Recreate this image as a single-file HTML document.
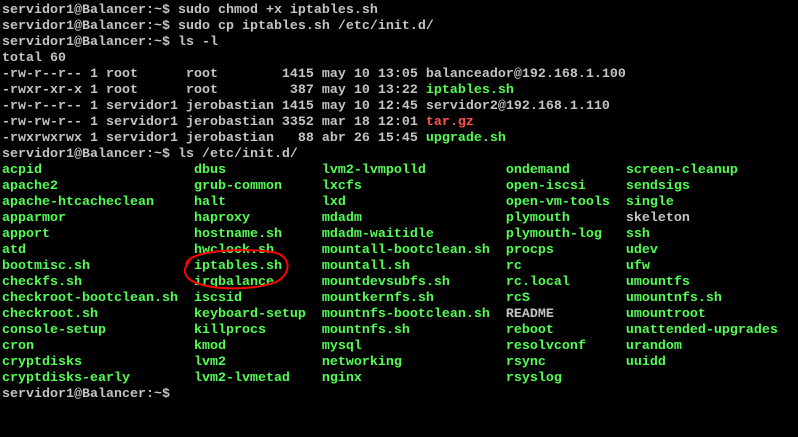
<!DOCTYPE html><html><head><style>
body{margin:0;background:#000;width:798px;height:437px;overflow:hidden;position:relative}
pre{margin:0;padding:3px 0 0 2px;font-family:"Liberation Mono",monospace;font-size:13.33px;line-height:16px;color:#c4c4c4;font-weight:bold}
.g{color:#54fc54}.r{color:#fc5454}
</style></head><body><pre>servidor1@Balancer:~$ sudo chmod +x iptables.sh
servidor1@Balancer:~$ sudo cp iptables.sh /etc/init.d/
servidor1@Balancer:~$ ls -l
total 60
-rw-r--r-- 1 root      root        1415 may 10 13:05 balanceador@192.168.1.100
-rwxr-xr-x 1 root      root         387 may 10 13:22 <span class="g">iptables.sh</span>
-rw-r--r-- 1 servidor1 jerobastian 1415 may 10 12:45 servidor2@192.168.1.110
-rw-rw-r-- 1 servidor1 jerobastian 3352 mar 18 12:01 <span class="r">tar.gz</span>
-rwxrwxrwx 1 servidor1 jerobastian   88 abr 26 15:45 <span class="g">upgrade.sh</span>
servidor1@Balancer:~$ ls /etc/init.d/
<span class="g">acpid                   dbus            lvm2-lvmpolld          ondemand       screen-cleanup
apache2                 grub-common     lxcfs                  open-iscsi     sendsigs
apache-htcacheclean     halt            lxd                    open-vm-tools  single
apparmor                haproxy         mdadm                  plymouth       </span>skeleton<span class="g">
apport                  hostname.sh     mdadm-waitidle         plymouth-log   ssh
atd                     hwclock.sh      mountall-bootclean.sh  procps         udev
bootmisc.sh             iptables.sh     mountall.sh            rc             ufw
checkfs.sh              irqbalance      mountdevsubfs.sh       rc.local       umountfs
checkroot-bootclean.sh  iscsid          mountkernfs.sh         rcS            umountnfs.sh
checkroot.sh            keyboard-setup  mountnfs-bootclean.sh  </span>README<span class="g">         umountroot
console-setup           killprocs       mountnfs.sh            reboot         unattended-upgrades
cron                    kmod            mysql                  resolvconf     urandom
cryptdisks              lvm2            networking             rsync          uuidd
cryptdisks-early        lvm2-lvmetad    nginx                  rsyslog</span>
servidor1@Balancer:~$</pre>
<svg style="position:absolute;left:0;top:0" width="798" height="437"><path d="M186 264 C190 250 240 248 272 252 C292 255 292 274 276 282 C250 292 200 290 188 278 C183 272 184 268 190 260" fill="none" stroke="#f00" stroke-width="2"/></svg>
</body></html>
